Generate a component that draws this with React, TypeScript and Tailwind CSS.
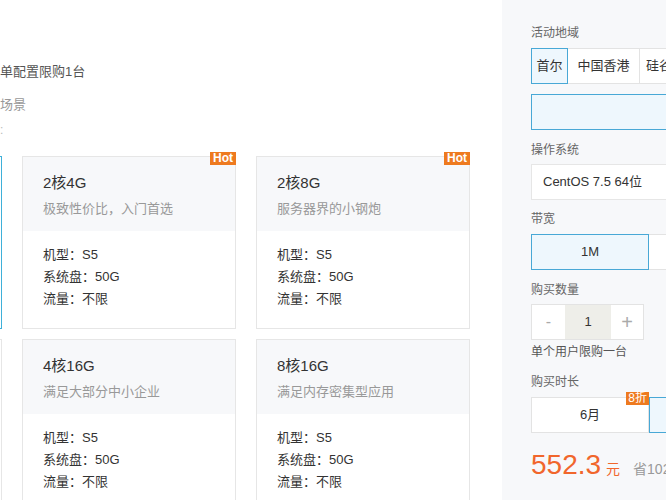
import React from 'react';

const font = "font-['Liberation_Sans','Noto_Sans_CJK_SC',sans-serif]";

type Plan = { title: string; desc: string; hot: boolean; active: boolean; hidden?: boolean };

// first column sits off-screen to the left, only its right edge shows
const plans: Plan[] = [
  { title: '', desc: '', hot: false, active: true, hidden: true },
  { title: '2核4G', desc: '极致性价比，入门首选', hot: true, active: false },
  { title: '2核8G', desc: '服务器界的小钢炮', hot: true, active: false },
  { title: '', desc: '', hot: false, active: false, hidden: true },
  { title: '4核16G', desc: '满足大部分中小企业', hot: false, active: false },
  { title: '8核16G', desc: '满足内存密集型应用', hot: false, active: false },
];

function PlanCard({ title, desc, hot, active, hidden }: Plan) {
  return (
    <div
      className={`relative border ${
        active ? 'border-[#3fb0d9]' : 'border-[#e6e6e6]'
      } bg-white`}
    >
      {hot && (
        <span className="absolute right-[-1px] top-[-5px] h-[13px] bg-[#ee7a1f] px-[3px] text-[12px] font-bold leading-[13px] text-white">
          Hot
        </span>
      )}
      {!hidden && (
        <>
          <div className="bg-[#f7f8fa] px-5 pb-3 pt-4">
            <div className="text-[15px] leading-5 text-[#333]">{title}</div>
            <div className="mt-1.5 text-[13px] leading-5 text-[#999]">{desc}</div>
          </div>
          <div className="px-5 pb-[18px] pt-[13px] text-[13px] leading-[22px] text-[#333]">
            <div>机型：S5</div>
            <div>系统盘：50G</div>
            <div>流量：不限</div>
          </div>
        </>
      )}
    </div>
  );
}

function Label({ children, className = '' }: { children: React.ReactNode; className?: string }) {
  return <div className={`text-[12px] leading-5 text-[#666] ${className}`}>{children}</div>;
}

export default function App() {
  return (
    <div className={`flex h-[500px] w-[666px] overflow-hidden bg-white ${font}`}>
      {/* Plans */}
      <div className="w-[502px] shrink-0 overflow-hidden">
        <div className="pt-[62px] text-[13px] leading-5 text-[#555]">单配置限购1台</div>
        <div className="mt-[13px] text-[13px] leading-5 text-[#999]">场景</div>
        <div className="mt-[5px] text-[12px] leading-5 text-[#bbb]">:</div>
        <div className="ml-[-212px] mt-4 grid grid-cols-[214px_214px_214px] gap-x-5 gap-y-[10px]">
          {plans.map((p, i) => (
            <PlanCard key={i} {...p} />
          ))}
        </div>
      </div>

      {/* Order panel */}
      <div className="flex-1 overflow-hidden bg-[#f7f8fa] pl-[29px] pt-[23px]">
        <div className="w-[300px]">
          <Label>活动地域</Label>
          <div className="mt-[5px] flex h-9 text-[13px] text-[#333]">
            <div className="flex w-[37px] items-center justify-center border border-[#48a8d6] bg-[#eef7fd]">
              首尔
            </div>
            <div className="flex w-[72px] items-center justify-center border-y border-r border-[#e3e3e3] bg-white">
              中国香港
            </div>
            <div className="flex items-center border-y border-r border-[#e3e3e3] bg-white px-[6px]">
              硅谷
            </div>
          </div>
          <div className="mt-[10px] h-9 border border-[#48a8d6] bg-[#eef7fd]" />

          <Label className="mt-[10px]">操作系统</Label>
          <div className="mt-1 flex h-9 items-center border border-[#e6e6e6] bg-white pl-[11px] text-[13px] text-[#333]">
            CentOS 7.5 64位
          </div>

          <Label className="mt-[9px]">带宽</Label>
          <div className="mt-[5px] flex h-9 text-[13px] text-[#333]">
            <div className="flex w-[118px] items-center justify-center border border-[#48a8d6] bg-[#eef7fd]">
              1M
            </div>
            <div className="w-[118px] border-y border-r border-[#e3e3e3] bg-white" />
          </div>

          <Label className="mt-[10px]">购买数量</Label>
          <div className="mt-1 flex h-9 w-[113px] border border-[#e3e3e3] bg-white">
            <div className="flex w-[33px] items-center justify-center text-[16px] text-[#aaa]">-</div>
            <div className="flex w-[46px] items-center justify-center bg-[#eeeee9] text-[13px] text-[#333]">1</div>
            <div className="flex flex-1 items-center justify-center text-[20px] font-light text-[#aaa]">+</div>
          </div>
          <div className="mt-[2px] text-[12px] leading-5 text-[#555]">单个用户限购一台</div>

          <Label className="mt-[10px]">购买时长</Label>
          <div className="mt-[5px] flex h-9 text-[13px] text-[#333]">
            <div className="relative flex w-[118px] items-center justify-center border border-[#e3e3e3] bg-white">
              6月
              <span className="absolute right-[-1px] top-[-6px] h-[13px] bg-[#ee7a1f] px-[2px] text-[12px] leading-[13px] text-white">
                8折
              </span>
            </div>
            <div className="w-[118px] border border-[#48a8d6] bg-[#eef7fd]" />
          </div>

          <div className="mt-[14px] flex h-9 items-baseline whitespace-nowrap">
            <span className="text-[28px] leading-9 text-[#f1662c]">552.3</span>
            <span className="ml-[5px] text-[14px] text-[#f1662c]">元</span>
            <span className="ml-[13px] text-[14px] text-[#999]">省102</span>
          </div>
        </div>
      </div>
    </div>
  );
}
